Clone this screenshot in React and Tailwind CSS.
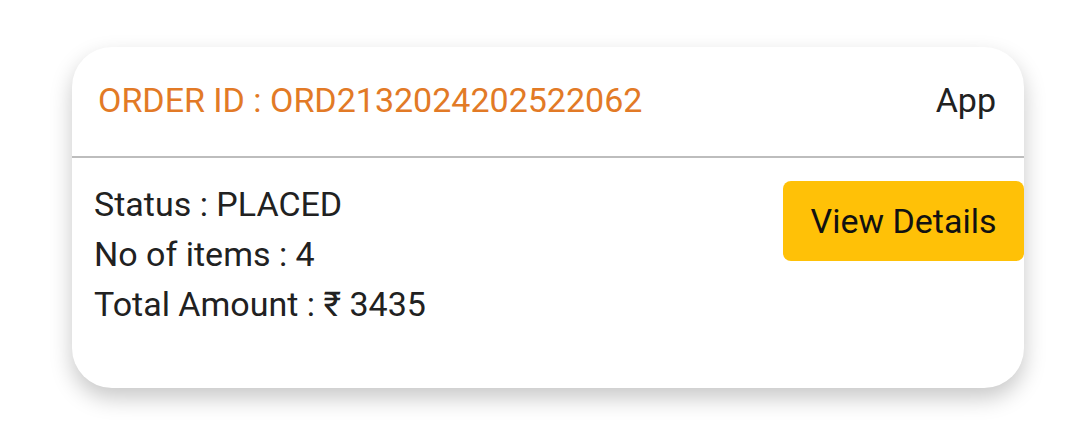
export default function App() {
  return (
    <div className="w-[1080px] h-[421px] bg-white pt-[47px] pl-[72px]" style={{ fontFamily: "Roboto, 'Liberation Sans', sans-serif" }}>
      <div className="w-[952px] h-[341px] bg-white rounded-[40px] shadow-[0_10px_22px_rgba(0,0,0,0.22)] flex flex-col">
        <div className="h-[109px] flex items-center justify-between pl-[26px] pr-[28px] pb-[3px]">
          <span className="text-[34px] text-[#E27A26]">ORDER ID : ORD2132024202522062</span>
          <span className="text-[34px] text-[#212121]">App</span>
        </div>
        <div className="h-[2px] bg-[#bdbdbd]" />
        <div className="flex justify-between items-start pt-[21px]">
          <div className="pl-[22px] text-[34px] leading-[50px] text-[#212121]">
            <div>Status : PLACED</div>
            <div>No of items : 4</div>
            <div>Total Amount : ₹ 3435</div>
          </div>
          <button className="mt-[2px] w-[241px] h-[80px] bg-[#FFC107] rounded-[8px] text-[34px] text-[#111] flex items-center justify-center">
            View Details
          </button>
        </div>
      </div>
    </div>
  );
}
